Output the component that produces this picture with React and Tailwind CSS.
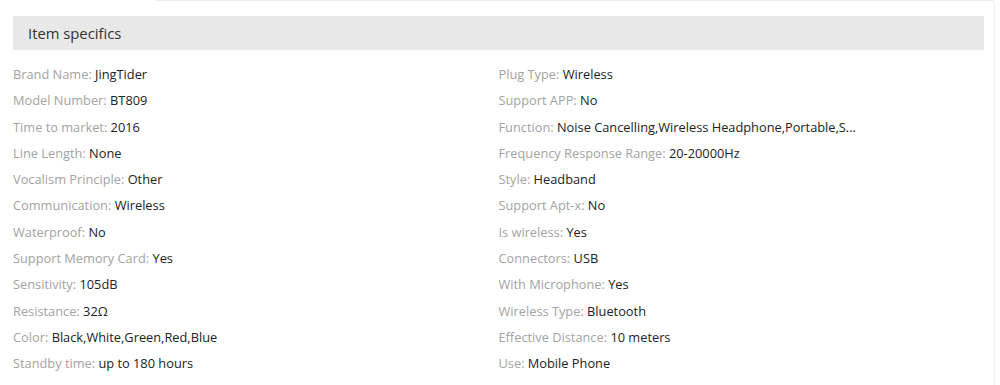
import React from "react";

const leftSpecs = [
  ["Brand Name", "JingTider"],
  ["Model Number", "BT809"],
  ["Time to market", "2016"],
  ["Line Length", "None"],
  ["Vocalism Principle", "Other"],
  ["Communication", "Wireless"],
  ["Waterproof", "No"],
  ["Support Memory Card", "Yes"],
  ["Sensitivity", "105dB"],
  ["Resistance", "32Ω"],
  ["Color", "Black,White,Green,Red,Blue"],
  ["Standby time", "up to 180 hours"],
];

const rightSpecs = [
  ["Plug Type", "Wireless"],
  ["Support APP", "No"],
  ["Function", "Noise Cancelling,Wireless Headphone,Portable,S..."],
  ["Frequency Response Range", "20-20000Hz"],
  ["Style", "Headband"],
  ["Support Apt-x", "No"],
  ["Is wireless", "Yes"],
  ["Connectors", "USB"],
  ["With Microphone", "Yes"],
  ["Wireless Type", "Bluetooth"],
  ["Effective Distance", "10 meters"],
  ["Use", "Mobile Phone"],
];

const SpecColumn = ({ items }) => (
  <ul className="flex flex-col">
    {items.map(([label, value]) => (
      <li key={label} className="h-[26.3px] leading-[26.3px] whitespace-nowrap">
        <span className="text-[#a3a3a3]">{label}:</span>{" "}
        <span className="text-[#222]">{value}</span>
      </li>
    ))}
  </ul>
);

export default function App() {
  return (
    <div
      className="w-[1000px] h-[385px] bg-white relative overflow-hidden text-[12.8px]"
      style={{ fontFamily: '"Open Sans", Arial, sans-serif' }}
    >
      {/* tab strip edge above the panel */}
      <div className="h-[2px] ml-[155px] mr-[6px] border-t border-[#ececec]" />
      <div className="border-r border-[#f0f0f0] mr-[5px] h-[383px] pl-[13px] pr-[10px] pt-[14px]">
        <div className="h-[34px] bg-[#e8e8e8] flex items-center pl-[15px] text-[14.8px] text-[#333]">
          Item specifics
        </div>
        <div className="grid grid-cols-2 mt-[11px]">
          <SpecColumn items={leftSpecs} />
          <SpecColumn items={rightSpecs} />
        </div>
      </div>
    </div>
  );
}
